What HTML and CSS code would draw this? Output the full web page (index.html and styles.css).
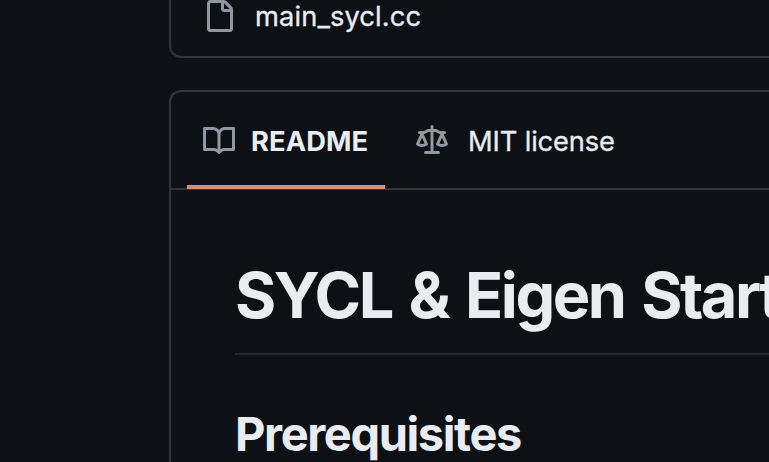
FILE: index.html
```html
<!DOCTYPE html>
<html lang="en">
<head>
<meta charset="utf-8">
<title>Repository</title>
<link rel="stylesheet" href="styles.css">
</head>
<body>
<main class="page">
  <section class="files">
    <svg class="icon" viewBox="0 0 16 16"><path d="M2 1.75C2 .784 2.784 0 3.75 0h6.586c.464 0 .909.184 1.237.513l2.914 2.914c.329.328.513.773.513 1.237v9.586A1.75 1.75 0 0 1 13.25 16h-9.5A1.75 1.75 0 0 1 2 14.25Zm1.75-.25a.25.25 0 0 0-.25.25v12.5c0 .138.112.25.25.25h9.5a.25.25 0 0 0 .25-.25V6h-2.75A1.75 1.75 0 0 1 9 4.25V1.5Zm6.75.062V4.25c0 .138.112.25.25.25h2.688l-.011-.013-2.914-2.914-.013-.011Z"/></svg>
    <span class="file-name">main_sycl.cc</span>
  </section>
  <section class="overview">
    <nav class="tabs">
      <a class="tab tab-active">
        <svg class="icon" viewBox="0 0 16 16"><path d="M0 1.75A.75.75 0 0 1 .75 1h4.253c1.227 0 2.317.59 3 1.501A3.743 3.743 0 0 1 11.006 1h4.245a.75.75 0 0 1 .75.75v10.5a.75.75 0 0 1-.75.75h-4.507a2.25 2.25 0 0 0-1.591.659l-.622.621a.75.75 0 0 1-1.06 0l-.622-.621A2.25 2.25 0 0 0 5.258 13H.75a.75.75 0 0 1-.75-.75Zm7.251 10.324.004-5.073-.002-2.253A2.25 2.25 0 0 0 5.003 2.5H1.5v9h3.757a3.75 3.75 0 0 1 1.994.574ZM8.755 4.75l-.004 7.322a3.752 3.752 0 0 1 1.992-.572H14.5v-9h-3.495a2.25 2.25 0 0 0-2.25 2.25Z"/></svg>
        <span class="tab-readme">README</span>
      </a>
      <a class="tab">
        <svg class="icon" viewBox="0 0 16 16"><path d="M8.75.75V2h.985c.304 0 .603.08.867.231l1.29.736c.038.022.08.033.124.033h2.234a.75.75 0 0 1 0 1.5h-.427l2.111 4.692a.75.75 0 0 1-.154.838l-.53-.53.529.531-.001.002-.002.002-.006.006-.006.005-.01.01-.045.04c-.21.176-.441.327-.686.45C14.556 10.78 13.88 11 13 11a4.498 4.498 0 0 1-2.023-.454 3.544 3.544 0 0 1-.686-.45l-.045-.04-.016-.015-.006-.006-.004-.004v-.001a.75.75 0 0 1-.154-.838L12.178 4.5h-.162c-.305 0-.604-.079-.868-.231l-1.29-.736a.245.245 0 0 0-.124-.033H8.75V13h2.5a.75.75 0 0 1 0 1.5h-6.5a.75.75 0 0 1 0-1.5h2.5V3.5h-.984a.245.245 0 0 0-.124.033l-1.289.737c-.265.15-.564.23-.869.23h-.162l2.112 4.692a.75.75 0 0 1-.154.838l-.53-.53.529.531-.001.002-.002.002-.006.006-.016.015-.045.04c-.21.176-.441.327-.686.45C4.556 10.78 3.88 11 3 11a4.498 4.498 0 0 1-2.023-.454 3.544 3.544 0 0 1-.686-.45l-.045-.04-.016-.015-.006-.006-.004-.004v-.001a.75.75 0 0 1-.154-.838L2.178 4.5H1.75a.75.75 0 0 1 0-1.5h2.234a.249.249 0 0 0 .125-.033l1.288-.737c.265-.15.564-.23.869-.23h.984V.75a.75.75 0 0 1 1.5 0Zm2.945 8.477c.285.135.718.273 1.305.273s1.02-.138 1.305-.273L13 6.327Zm-10 0c.285.135.718.273 1.305.273s1.02-.138 1.305-.273L3 6.327Z"/></svg>
        <span class="tab-license">MIT license</span>
      </a>
    </nav>
    <article class="readme">
      <h1 class="title">SYCL &amp; Eigen Start</h1>
      <h2 class="subtitle">Prerequisites</h2>
    </article>
  </section>
</main>
</body>
</html>
```

FILE: styles.css
```css
* {
  box-sizing: border-box;
}

body {
  margin: 0;
  height: 462px;
  overflow: hidden;
  background: #0d1116;
  color: #e9edf2;
  font-family: Inter, "Liberation Sans", sans-serif;
  font-size: 27.3px;
}

.page {
  height: 462px;
  padding-left: 169px;
  overflow: hidden;
}

.icon {
  display: block;
  flex: none;
  width: 32px;
  height: 32px;
  fill: #9198a1;
}

.files {
  display: flex;
  align-items: flex-start;
  height: 58px;
  padding-left: 32px;
  border: 2px solid #31363d;
  border-top: 0;
  border-right: 0;
  border-radius: 0 0 0 12px;
}

.file-name {
  margin-left: 20px;
  line-height: 34px;
  letter-spacing: 0.1px;
  -webkit-text-stroke: 0.3px currentColor;
}

.overview {
  height: 372px;
  margin-top: 32px;
  border: 2px solid #31363d;
  border-right: 0;
  border-bottom: 0;
  border-radius: 12px 0 0 0;
}

.tabs {
  display: flex;
  gap: 15px;
  height: 98px;
  padding-left: 16px;
  border-bottom: 2px solid #31363d;
}

.tab {
  display: flex;
  align-items: center;
  gap: 16px;
  height: 97px;
  padding: 0 16px;
  line-height: 40px;
}

.tab-active {
  width: 198px;
  padding-top: 4px;
  border-bottom: 4px solid #dc8a75;
}

.tab-readme {
  padding-top: 2px;
  font-weight: 700;
  letter-spacing: 0.1px;
}

.tab-license {
  margin-left: 4px;
  padding-top: 2px;
  letter-spacing: -0.15px;
  -webkit-text-stroke: 0.3px currentColor;
}

.readme {
  padding: 64px 0 0 64px;
}

.title {
  height: 101px;
  margin: 0;
  border-bottom: 2px solid #26292e;
  font-size: 63px;
  font-weight: 700;
  line-height: 82px;
  letter-spacing: -2.5px;
  word-spacing: 4.3px;
  white-space: nowrap;
}

.subtitle {
  margin: 48px 0 0;
  font-size: 47px;
  font-weight: 700;
  line-height: 62px;
  letter-spacing: -1.4px;
}
```
